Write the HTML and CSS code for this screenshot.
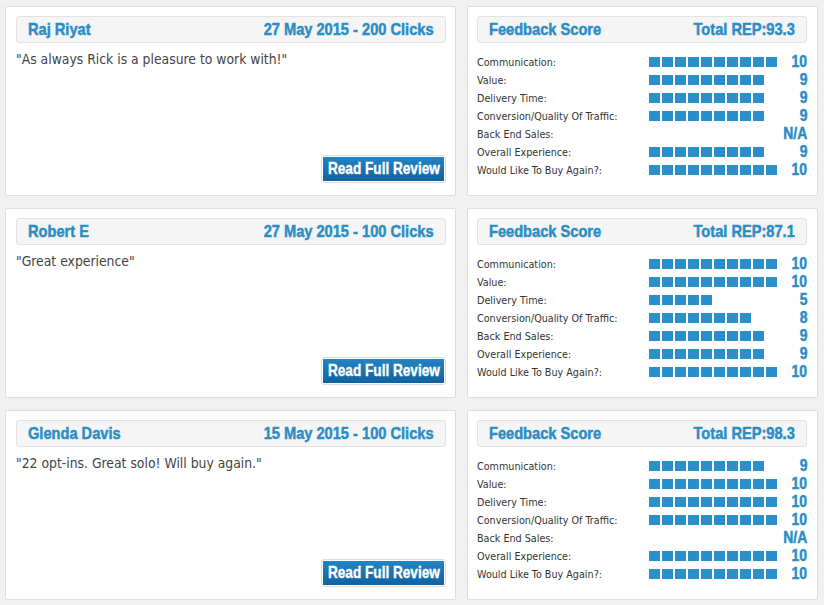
FILE: index.html
```html
<!DOCTYPE html>
<html>
<head>
<meta charset="utf-8">
<link rel="stylesheet" href="styles.css">
</head>
<body>
<div class="page">
  <div class="row">
    <div class="review">
      <div class="bar-head"><span class="l">Raj Riyat</span><span class="r">27 May 2015 - 200 Clicks</span></div>
      <p class="quote">"As always Rick is a pleasure to work with!"</p>
      <a class="btn"><span><b>Read Full Review</b></span></a>
    </div>
    <div class="score">
      <div class="bar-head"><span class="l">Feedback Score</span><span class="r">Total REP:93.3</span></div>
      <div class="rows">
        <div class="srow"><span class="lbl">Communication:</span><span class="bars"><span class="sq" style="width:128px"></span></span><span class="num"><b>10</b></span></div>
        <div class="srow"><span class="lbl">Value:</span><span class="bars"><span class="sq" style="width:115px"></span></span><span class="num"><b>9</b></span></div>
        <div class="srow"><span class="lbl">Delivery Time:</span><span class="bars"><span class="sq" style="width:115px"></span></span><span class="num"><b>9</b></span></div>
        <div class="srow"><span class="lbl">Conversion/Quality Of Traffic:</span><span class="bars"><span class="sq" style="width:115px"></span></span><span class="num"><b>9</b></span></div>
        <div class="srow"><span class="lbl">Back End Sales:</span><span class="bars"><span class="sq" style="width:0px"></span></span><span class="num"><b>N/A</b></span></div>
        <div class="srow"><span class="lbl">Overall Experience:</span><span class="bars"><span class="sq" style="width:115px"></span></span><span class="num"><b>9</b></span></div>
        <div class="srow"><span class="lbl">Would Like To Buy Again?:</span><span class="bars"><span class="sq" style="width:128px"></span></span><span class="num"><b>10</b></span></div>
      </div>
    </div>
  </div>
  <div class="row">
    <div class="review">
      <div class="bar-head"><span class="l">Robert E</span><span class="r">27 May 2015 - 100 Clicks</span></div>
      <p class="quote">"Great experience"</p>
      <a class="btn"><span><b>Read Full Review</b></span></a>
    </div>
    <div class="score">
      <div class="bar-head"><span class="l">Feedback Score</span><span class="r">Total REP:87.1</span></div>
      <div class="rows">
        <div class="srow"><span class="lbl">Communication:</span><span class="bars"><span class="sq" style="width:128px"></span></span><span class="num"><b>10</b></span></div>
        <div class="srow"><span class="lbl">Value:</span><span class="bars"><span class="sq" style="width:128px"></span></span><span class="num"><b>10</b></span></div>
        <div class="srow"><span class="lbl">Delivery Time:</span><span class="bars"><span class="sq" style="width:63px"></span></span><span class="num"><b>5</b></span></div>
        <div class="srow"><span class="lbl">Conversion/Quality Of Traffic:</span><span class="bars"><span class="sq" style="width:102px"></span></span><span class="num"><b>8</b></span></div>
        <div class="srow"><span class="lbl">Back End Sales:</span><span class="bars"><span class="sq" style="width:115px"></span></span><span class="num"><b>9</b></span></div>
        <div class="srow"><span class="lbl">Overall Experience:</span><span class="bars"><span class="sq" style="width:115px"></span></span><span class="num"><b>9</b></span></div>
        <div class="srow"><span class="lbl">Would Like To Buy Again?:</span><span class="bars"><span class="sq" style="width:128px"></span></span><span class="num"><b>10</b></span></div>
      </div>
    </div>
  </div>
  <div class="row">
    <div class="review">
      <div class="bar-head"><span class="l">Glenda Davis</span><span class="r">15 May 2015 - 100 Clicks</span></div>
      <p class="quote">"22 opt-ins. Great solo! Will buy again."</p>
      <a class="btn"><span><b>Read Full Review</b></span></a>
    </div>
    <div class="score">
      <div class="bar-head"><span class="l">Feedback Score</span><span class="r">Total REP:98.3</span></div>
      <div class="rows">
        <div class="srow"><span class="lbl">Communication:</span><span class="bars"><span class="sq" style="width:115px"></span></span><span class="num"><b>9</b></span></div>
        <div class="srow"><span class="lbl">Value:</span><span class="bars"><span class="sq" style="width:128px"></span></span><span class="num"><b>10</b></span></div>
        <div class="srow"><span class="lbl">Delivery Time:</span><span class="bars"><span class="sq" style="width:128px"></span></span><span class="num"><b>10</b></span></div>
        <div class="srow"><span class="lbl">Conversion/Quality Of Traffic:</span><span class="bars"><span class="sq" style="width:128px"></span></span><span class="num"><b>10</b></span></div>
        <div class="srow"><span class="lbl">Back End Sales:</span><span class="bars"><span class="sq" style="width:0px"></span></span><span class="num"><b>N/A</b></span></div>
        <div class="srow"><span class="lbl">Overall Experience:</span><span class="bars"><span class="sq" style="width:128px"></span></span><span class="num"><b>10</b></span></div>
        <div class="srow"><span class="lbl">Would Like To Buy Again?:</span><span class="bars"><span class="sq" style="width:128px"></span></span><span class="num"><b>10</b></span></div>
      </div>
    </div>
  </div>
</div>
</body>
</html>
```
FILE: styles.css
```css
html, body {
  margin: 0;
  padding: 0;
  background: #f1f1f1;
}
.page {
  padding: 6px 6px 0 5px;
  display: flex;
  flex-direction: column;
  gap: 12px;
}
.row {
  display: flex;
  gap: 11px;
}
.review, .score {
  box-sizing: border-box;
  height: 190px;
  background: #fff;
  border: 1px solid #dedede;
  border-radius: 2px;
}
.review {
  width: 451px;
  padding: 9px 9px 12px 10px;
  display: flex;
  flex-direction: column;
}
.score {
  width: 351px;
  padding: 9px 10px 0 9px;
}
.bar-head {
  box-sizing: border-box;
  height: 27px;
  display: flex;
  justify-content: space-between;
  align-items: center;
  padding: 0 11px;
  background: #f5f5f5;
  border: 1px solid #e2e2e2;
  border-radius: 3px;
  font-family: "Liberation Sans", Arial, sans-serif;
  font-weight: bold;
  font-size: 17px;
  color: #2a8dc5;
  white-space: nowrap;
  -webkit-text-stroke: 0.5px #2a8dc5;
}
.bar-head .l,
.bar-head .r {
  display: inline-block;
  transform: scaleX(0.86);
}
.bar-head .l { transform-origin: left center; }
.bar-head .r { transform-origin: right center; }
.quote {
  margin: 8px 0 0 0;
  font-family: "DejaVu Sans Condensed", "Liberation Sans", sans-serif;
  font-size: 13.8px;
  color: #444;
}
.btn {
  margin-top: auto;
  align-self: flex-end;
  padding: 1px;
  border: 1px solid #dcdcdc;
  border-radius: 3px;
  background: #fff;
}
.btn span {
  display: flex;
  justify-content: center;
  align-items: center;
  width: 121px;
  height: 24px;
  background: linear-gradient(#2384c4, #0f62a0);
  color: #fff;
  font-family: "Liberation Sans", Arial, sans-serif;
  font-weight: bold;
  font-size: 17px;
  white-space: nowrap;
  -webkit-text-stroke: 0.4px #fff;
}
.btn b {
  flex: none;
  display: block;
  transform: scaleX(0.8);
  transform-origin: center;
}
.rows {
  margin-top: 10px;
}
.srow {
  display: flex;
  align-items: center;
  height: 18px;
}
.lbl {
  flex: 1;
  font-family: "DejaVu Sans Condensed", "Liberation Sans", sans-serif;
  font-size: 10.7px;
  color: #333;
}
.bars {
  width: 128px;
  height: 10px;
}
.sq {
  display: block;
  height: 10px;
  background: repeating-linear-gradient(90deg, #2a8fcb 0 11px, transparent 11px 13px);
}
.num {
  width: 30px;
  text-align: right;
  font-family: "Liberation Sans", Arial, sans-serif;
  font-weight: bold;
  font-size: 17px;
  color: #2a8dc5;
  line-height: 18px;
  -webkit-text-stroke: 0.5px #2a8dc5;
}
.num b {
  display: inline-block;
  transform: scaleX(0.82);
  transform-origin: right center;
}
```
